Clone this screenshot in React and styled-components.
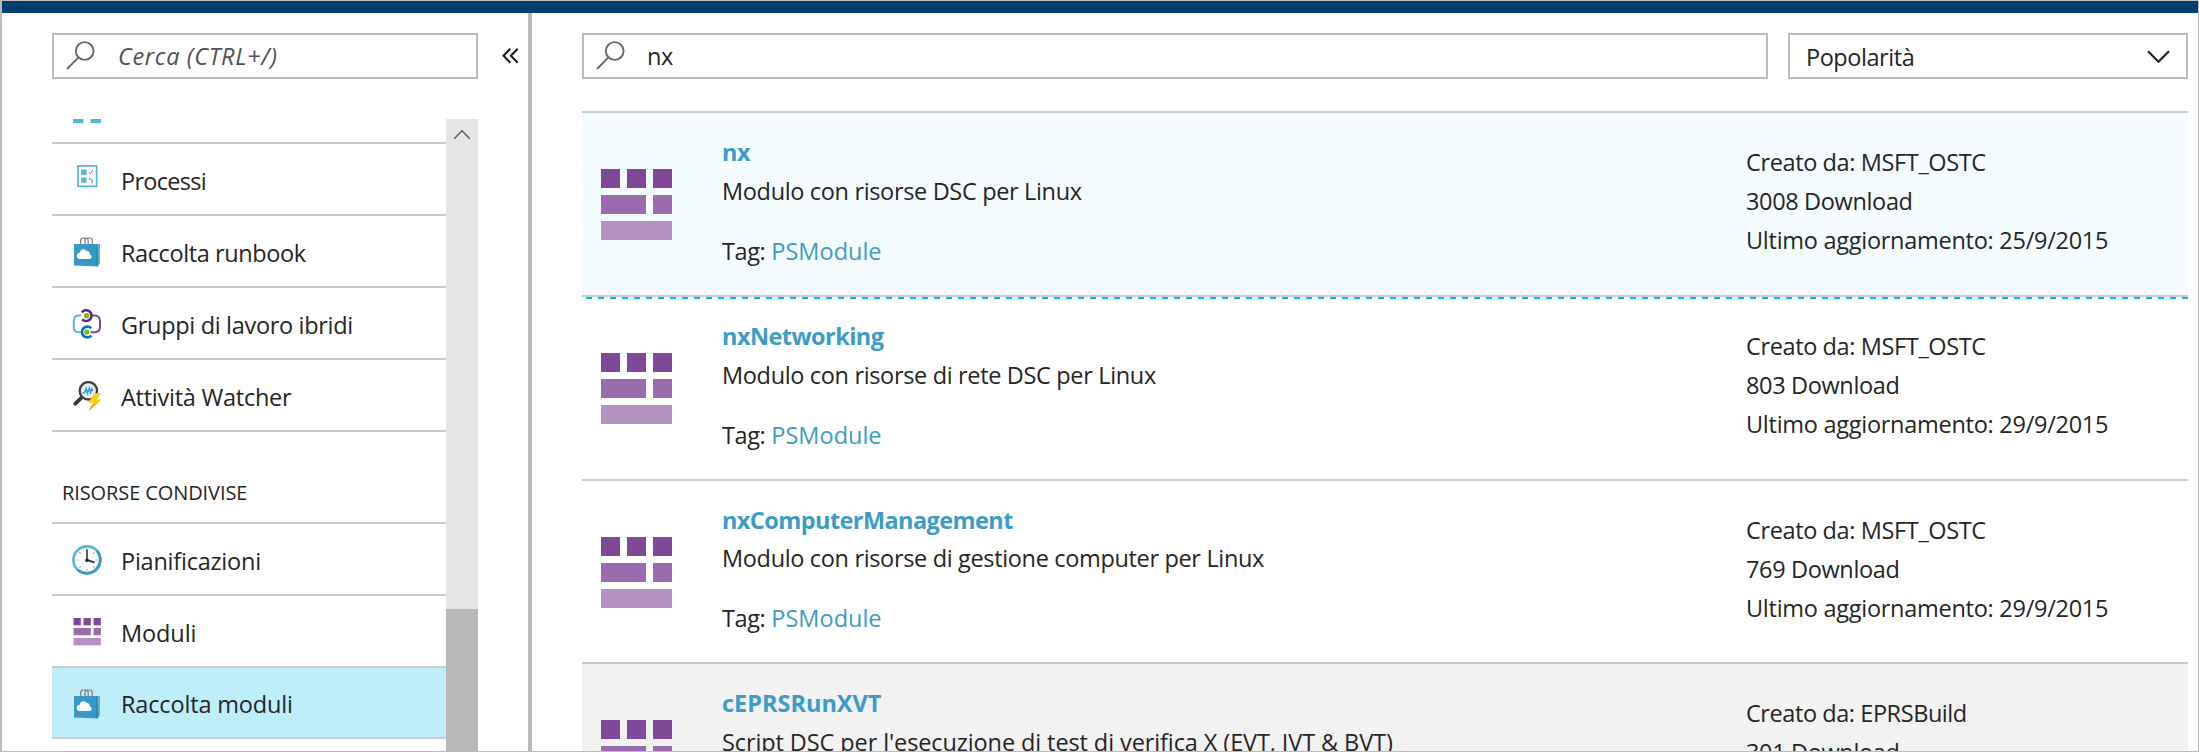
import React from 'react';
import styled, { createGlobalStyle } from 'styled-components';

const GlobalStyle = createGlobalStyle`
  * { box-sizing: border-box; }
  body {
    margin: 0;
    background: #fff;
    color: #252525;
    font-family: "Open Sans", "Noto Sans", sans-serif;
    font-size: 23.5px;
    font-variant-ligatures: none;
  }
  svg { display: block; flex: none; }
`;

const Frame = styled.div`
  width: 2199px;
  height: 752px;
  display: flex;
  flex-direction: column;
  overflow: hidden;
  border: 1px solid #bbb;
  border-left-width: 2px;
`;

const TopBar = styled.header`
  flex: none;
  height: 12px;
  background: #003e6e;
`;

const Body = styled.div`
  flex: 1;
  min-height: 0;
  display: flex;
`;

const Sidebar = styled.aside`
  width: 530px;
  flex: none;
  display: flex;
  flex-direction: column;
  padding: 20px 0 0 50px;
  border-right: 4px solid #bababa;
`;

const SidebarHead = styled.div`
  display: flex;
  align-items: center;
  gap: 24px;
  margin-bottom: 40px;
`;

const Label = styled.span`
  white-space: pre;
  letter-spacing: ${(p) => p.$track || 0}px;
`;

const Field = styled.div`
  display: flex;
  align-items: center;
  height: 46px;
  flex: ${(p) => (p.$width ? 'none' : '1')};
  width: ${(p) => (p.$width ? `${p.$width}px` : 'auto')};
  border: 2px solid #bbb;
  line-height: 30px;
`;

const SearchField = styled(Field)`
  gap: ${(p) => p.$gap}px;
  padding: 0 12px 1px;
`;

const Placeholder = styled(Label)`
  font-style: italic;
  color: #505050;
`;

const SortSelect = styled(Field)`
  justify-content: space-between;
  padding: 2px 16px 0 16px;
`;

const ScrollArea = styled.div`
  flex: 1;
  min-height: 0;
  display: flex;
  width: 426px;
  overflow: hidden;
`;

const Menu = styled.nav`
  flex: 1;
`;

const ClippedEntry = styled.div`
  height: 25px;
  padding-left: 21px;
  border-bottom: 2px solid #ccc;
`;

const MenuEntry = styled.div`
  display: flex;
  align-items: flex-start;
  gap: 19px;
  height: ${(p) => (p.$active ? 71 : 72)}px;
  padding: 21px 0 0 20px;
  border-bottom: 2px solid #ccc;
  background: ${(p) => (p.$active ? '#bdeefa' : 'transparent')};
  line-height: ${(p) => (p.$active ? 30 : 32)}px;
`;

const MenuHeading = styled.div`
  height: 92px;
  padding: 46px 0 0 10px;
  border-bottom: 2px solid #ccc;
  font-size: 20px;
  font-weight: 500;
  line-height: 30px;
`;

const ScrollTrack = styled.div`
  width: 32px;
  display: flex;
  flex-direction: column;
  align-items: center;
  justify-content: space-between;
  padding-top: 10px;
  background: #e5e5e5;
`;

const ScrollThumb = styled.div`
  width: 32px;
  height: 142px;
  background: #b8b8b8;
`;

const Main = styled.main`
  flex: 1;
  min-width: 0;
  padding: 20px 10px 0 50px;
`;

const Toolbar = styled.div`
  display: flex;
  gap: 20px;
  margin-bottom: 32px;
`;

const ResultList = styled.div`
  border-top: 2px solid #ccc;
`;

const Result = styled.article`
  position: relative;
  display: flex;
  height: ${(p) => (p.$compact ? 183 : 184)}px;
  padding-left: 19px;
  border-bottom: 2px solid #ccc;
  background: ${(p) => p.$bg || 'transparent'};
  line-height: 39px;
`;

const FocusDashes = styled.div`
  position: absolute;
  left: 4px;
  right: 0;
  bottom: -4px;
  height: 2px;
  background: repeating-linear-gradient(to right, #00b9f1 0 6px, transparent 6px 12px);
`;

const ResultIcon = styled.div`
  width: 121px;
  padding-top: 56px;
`;

const ResultText = styled.div`
  flex: 1;
  padding-top: 20px;
`;

const ResultTitle = styled.div`
  font-weight: 700;
  color: #3d9bc7;
`;

const Description = styled.div`
  margin-top: ${(p) => (p.$compact ? -1 : 0)}px;
`;

const Tags = styled.div`
  display: flex;
  gap: 6px;
  margin-top: 21px;
`;

const TagLink = styled(Label)`
  color: #3d9bc7;
`;

const Meta = styled.div`
  width: 442px;
  padding-top: 30px;
`;

const SearchIcon = () => (
  <svg width="29" height="29" viewBox="0 0 29 29" fill="none" stroke="#666" strokeWidth="1.9">
    <circle cx="18.7" cy="10" r="8.9" />
    <path d="M12.2 16.6 1 28" />
  </svg>
);

const CollapseIcon = () => (
  <svg width="17" height="16" viewBox="0 0 17 16" fill="none" stroke="#151515" strokeWidth="2">
    <path d="M8.3 .8 1.5 7.8l6.8 7M15.7 .8 8.9 7.8l6.8 7" />
  </svg>
);

const ChevronDown = () => (
  <svg width="23" height="14" viewBox="0 0 23 14" fill="none" stroke="#222" strokeWidth="2.2">
    <path d="M1 1.2 11.5 11.8 22 1.2" />
  </svg>
);

const ScrollUp = () => (
  <svg width="18" height="11" viewBox="0 0 18 11" fill="none" stroke="#606060" strokeWidth="1.6">
    <path d="M1.2 9.8 9 1.8l7.8 8" />
  </svg>
);

const ClippedIcon = () => (
  <svg width="29" height="4" viewBox="0 0 29 4" fill="#59b4d9">
    <rect width="10.5" height="4" />
    <rect x="17.5" width="10.5" height="4" />
  </svg>
);

const JobsIcon = () => (
  <svg width="30" height="30" viewBox="0 0 30 30" fill="none">
    <rect x="6" y=".9" width="18.6" height="20.4" stroke="#59b4d9" strokeWidth="1.7" />
    <rect x="9" y="4.6" width="5.6" height="5.4" rx=".6" fill="#59b4d9" />
    <rect x="9" y="12.4" width="5.6" height="5.4" rx=".6" fill="#59b4d9" />
    <path d="M17 7.3l1.4 1.6 2.4-3.8" stroke="#777" strokeWidth="1" />
    <path d="M17.4 14.2h3v2.8h-1.6M17.4 12.6v2.6M20.2 15.4v3" stroke="#999" strokeWidth=".9" />
  </svg>
);

const BagIcon = () => (
  <svg width="30" height="30" viewBox="0 0 30 30" fill="none">
    <path d="M8.7 8V3.4Q8.7 1 11.2 1h2.3q2.7 0 2.7 2.4V8M13 8V3.4Q13 1 15.3 1h2.1q2.8 0 2.8 2.4V8" stroke="#7d7d7d" strokeWidth="1.2" />
    <path d="M2 7h24.3v22.6L2 28.6z" fill="#3999c6" />
    <path d="M24 29.8V7h4v19.6z" fill="#2f86b1" />
    <path d="M25.4 7H28v19.2l-1.6 2z" fill="#59b4d9" />
    <path d="M8 22a3.1 3.1 0 0 1-.2-6.2A3.8 3.8 0 0 1 14.8 14a3.3 3.3 0 0 1 3 3.4A2.4 2.4 0 0 1 18 22z" fill="#fff" />
  </svg>
);

const HybridIcon = () => (
  <svg width="30" height="30" viewBox="0 0 30 30" fill="none" strokeLinecap="butt">
    <path d="M9.4 6.6H7Q1.8 6.6 1.8 12v6.4q0 4.6 5 4.8H9" stroke="#59b4d9" strokeWidth="2" />
    <path d="M20 6.6h2.6q5.4 0 5.4 5.6v5.6q0 5.4-5.4 5.4h-4" stroke="#804998" strokeWidth="2" />
    <path d="M9.8 3.4a5.4 5.4 0 1 1 .4 7" stroke="#68217a" strokeWidth="2.6" />
    <path d="M19.2 19.2a5.4 5.4 0 1 0 .2 7.4" stroke="#0072c6" strokeWidth="2.6" />
    <circle cx="14.6" cy="6.7" r="2.6" fill="#7fba00" />
    <circle cx="14.8" cy="23.1" r="2.6" fill="#7fba00" />
  </svg>
);

const WatcherIcon = () => (
  <svg width="30" height="30" viewBox="0 0 30 30" fill="none">
    <path d="M9.8 16.4 3.2 22.8" stroke="#3a3a3a" strokeWidth="3.8" strokeLinecap="round" />
    <circle cx="16.4" cy="9.8" r="8.7" fill="#e9eef0" stroke="#3e3e3e" strokeWidth="2.3" />
    <path d="M10.4 12.4l2-.6 1.8-4 1.2 4.4 2-5.2 1 4.6 1.6-3.8.8 2.2" stroke="#2f9bd0" strokeWidth="1.5" />
    <path d="M22.2 12.2H29l-3.8 6.2 4.2-.2-12.6 12 4-8.6-4.6.2z" fill="#fcd116" />
    <path d="M29.4 18.2 16.8 30.2l2.4-5z" fill="#f8a42c" />
  </svg>
);

const ClockIcon = () => (
  <svg width="30" height="30" viewBox="0 0 30 30" fill="none">
    <circle cx="15" cy="15" r="13.6" fill="#fff" stroke="#59b4d9" strokeWidth="2.6" />
    <path d="M24.6 5.4A13.6 13.6 0 0 1 5.4 24.6" stroke="#3999c6" strokeWidth="2.6" />
    <path d="M15 3.6v1.8M15 24v1.8M4.4 15h2M23.6 15h2M7.4 7.4l1.3 1.3M21.3 21.3l1.3 1.3M7.4 22.6l1.3-1.3M21.3 8.7l1.3-1.3" stroke="#9a9a9a" strokeWidth="1.1" />
    <path d="M15 4.6v11" stroke="#555" strokeWidth="1.9" />
    <path d="M15 15l7.6 2.6" stroke="#444" strokeWidth="2.1" />
    <circle cx="15" cy="15.2" r="1.8" fill="#222" />
  </svg>
);

const ModuleBlocks = () => (
  <>
    <g fill="#804998">
      <rect width="19" height="19" />
      <rect x="26" width="19" height="19" />
      <rect x="52" width="19" height="19" />
    </g>
    <g fill="#9a6cad">
      <rect y="26" width="45" height="19" />
      <rect x="52" y="26" width="19" height="19" />
    </g>
    <rect y="52" width="71" height="19" fill="#b391c1" />
  </>
);

const ModuleIcon = () => (
  <svg width="71" height="71" viewBox="0 0 71 71">
    <ModuleBlocks />
  </svg>
);

const SmallModuleIcon = () => (
  <svg width="30" height="30" viewBox="-4 -2.6 78 78">
    <ModuleBlocks />
  </svg>
);

const processItems = [
  { text: 'Processi', track: -0.7, Icon: JobsIcon },
  { text: 'Raccolta runbook', track: -0.4, Icon: BagIcon },
  { text: 'Gruppi di lavoro ibridi', track: -0.32, Icon: HybridIcon },
  { text: 'Attività Watcher', track: -0.25, Icon: WatcherIcon },
];

const sharedItems = [
  { text: 'Pianificazioni', track: -0.23, Icon: ClockIcon },
  { text: 'Moduli', track: -0.1, Icon: SmallModuleIcon },
  { text: 'Raccolta moduli', track: -0.16, Icon: BagIcon, active: true },
];

const results = [
  {
    title: 'nx', titleTrack: -0.5, desc: 'Modulo con risorse DSC per Linux', track: -0.34,
    author: 'MSFT_OSTC', authorTrack: -0.38, downloads: 3008, date: '25/9/2015', bg: '#f4fcff', focused: true,
  },
  {
    title: 'nxNetworking', titleTrack: -0.55, desc: 'Modulo con risorse di rete DSC per Linux', track: -0.34,
    author: 'MSFT_OSTC', authorTrack: -0.38, downloads: 803, date: '29/9/2015',
  },
  {
    title: 'nxComputerManagement', titleTrack: -0.58, desc: 'Modulo con risorse di gestione computer per Linux', track: -0.34,
    author: 'MSFT_OSTC', authorTrack: -0.38, downloads: 769, date: '29/9/2015', compact: true,
  },
  {
    title: 'cEPRSRunXVT', titleTrack: 0, desc: "Script DSC per l'esecuzione di test di verifica X (EVT, IVT & BVT)", track: -0.1,
    author: 'EPRSBuild', authorTrack: -0.43, downloads: 301, date: '29/9/2015', bg: '#f2f2f2',
  },
];

function MenuItems({ items }) {
  return items.map(({ text, track, Icon, active }) => (
    <MenuEntry key={text} $active={active}>
      <Icon />
      <Label $track={track}>{text}</Label>
    </MenuEntry>
  ));
}

function ResultItem({ item }) {
  return (
    <Result $bg={item.bg} $compact={item.compact}>
      <ResultIcon><ModuleIcon /></ResultIcon>
      <ResultText>
        <ResultTitle><Label $track={item.titleTrack}>{item.title}</Label></ResultTitle>
        <Description $compact={item.compact}><Label $track={item.track}>{item.desc}</Label></Description>
        <Tags>
          <Label $track={-0.4}>Tag:</Label>
          <TagLink $track={0}>PSModule</TagLink>
        </Tags>
      </ResultText>
      <Meta>
        <div><Label $track={item.authorTrack}>{`Creato da: ${item.author}`}</Label></div>
        <div><Label $track={-0.35}>{`${item.downloads} Download`}</Label></div>
        <div><Label $track={-0.27}>{`Ultimo aggiornamento: ${item.date}`}</Label></div>
      </Meta>
      {item.focused && <FocusDashes />}
    </Result>
  );
}

export default function App() {
  return (
    <>
      <GlobalStyle />
      <Frame>
        <TopBar />
        <Body>
          <Sidebar>
            <SidebarHead>
              <SearchField $width={426} $gap={23}>
                <SearchIcon />
                <Placeholder $track={0.67}>Cerca (CTRL+/)</Placeholder>
              </SearchField>
              <CollapseIcon />
            </SidebarHead>
            <ScrollArea>
              <Menu>
                <ClippedEntry><ClippedIcon /></ClippedEntry>
                <MenuItems items={processItems} />
                <MenuHeading><Label $track={-0.1}>RISORSE CONDIVISE</Label></MenuHeading>
                <MenuItems items={sharedItems} />
              </Menu>
              <ScrollTrack>
                <ScrollUp />
                <ScrollThumb />
              </ScrollTrack>
            </ScrollArea>
          </Sidebar>
          <Main>
            <Toolbar>
              <SearchField $gap={22}>
                <SearchIcon />
                <Label $track={-0.5}>nx</Label>
              </SearchField>
              <SortSelect $width={400}>
                <Label $track={-0.45}>Popolarità</Label>
                <ChevronDown />
              </SortSelect>
            </Toolbar>
            <ResultList>
              {results.map((item) => <ResultItem key={item.title} item={item} />)}
            </ResultList>
          </Main>
        </Body>
      </Frame>
    </>
  );
}
